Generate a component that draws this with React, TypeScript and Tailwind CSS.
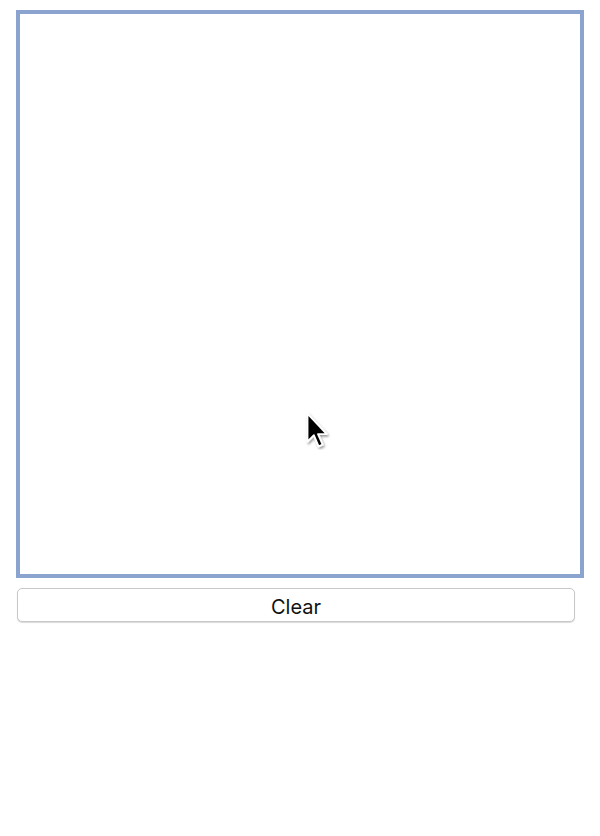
import React from "react";

const Cursor = () => (
  <svg width="28" height="40" viewBox="0 0 24 34" className="absolute left-[304px] top-[410px]">
    <defs>
      <filter id="cs" x="-50%" y="-50%" width="200%" height="200%">
        <feDropShadow dx="1" dy="1.5" stdDeviation="1" floodColor="#000" floodOpacity="0.4" />
      </filter>
    </defs>
    <path
      d="M3 3 L3 27 L8.5 21.5 L12.5 31 L16 29.5 L12 20.5 L19.5 20.5 Z"
      fill="#000"
      stroke="#fff"
      strokeWidth="1.6"
      strokeLinejoin="round"
      filter="url(#cs)"
    />
  </svg>
);

export default function App() {
  return (
    <div className="relative w-[600px] h-[836px] bg-white pl-4 pt-[10px] font-['Liberation_Sans',Arial,sans-serif]">
      <div className="w-[568px] h-[568px] border-4 border-[#8aa4cf] bg-white" />
      <button
        type="button"
        className="mt-[10px] ml-px w-[558px] h-[34px] pt-[3px] rounded-[5px] border border-[#c8c8c8] bg-white font-['Inter',sans-serif] text-[20px] text-[#111] shadow-[0_1px_1px_rgba(0,0,0,0.15)] flex items-center justify-center"
      >
        Clear
      </button>
      <Cursor />
    </div>
  );
}
